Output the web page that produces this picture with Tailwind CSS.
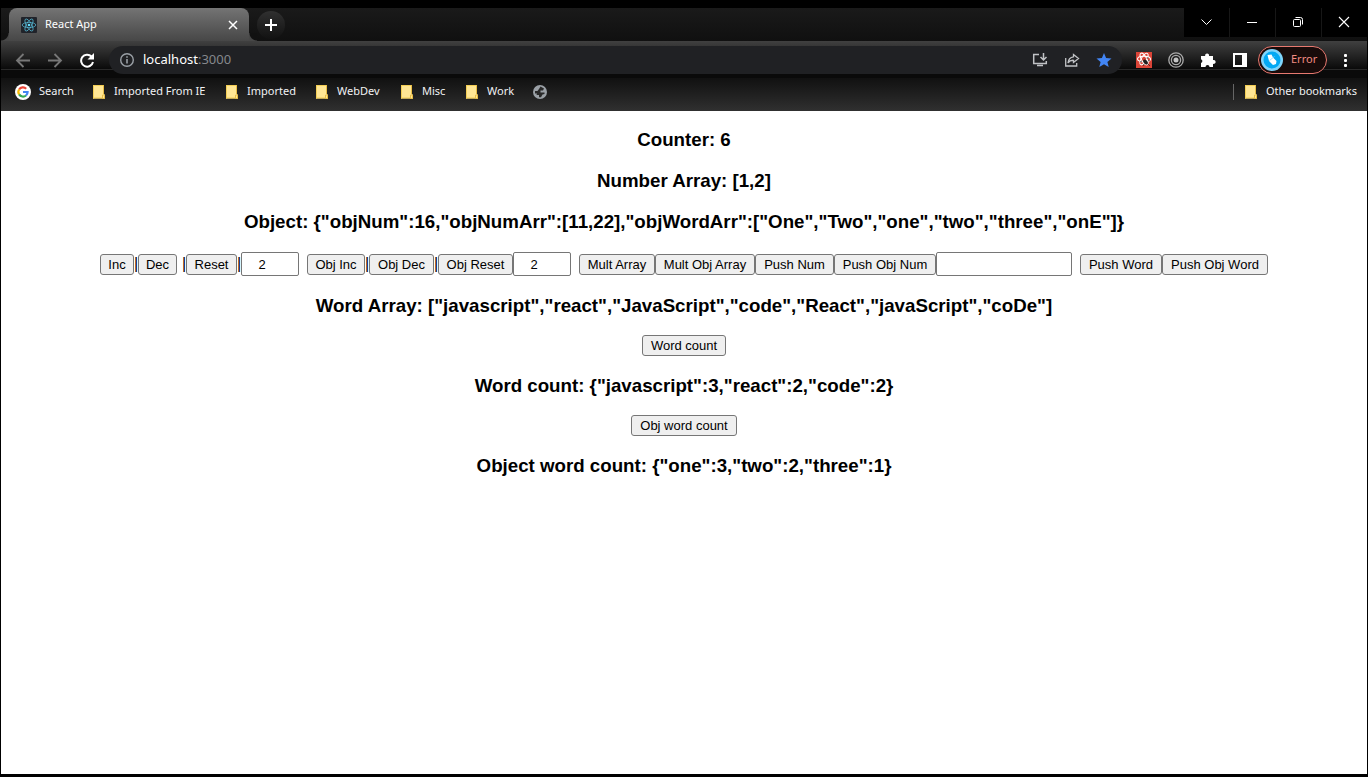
<!DOCTYPE html>
<html lang="en">
<head>
<meta charset="utf-8">
<title>React App</title>
<script src="https://cdn.jsdelivr.net/npm/@tailwindcss/browser@4"></script>
</head>
<body class="flex min-h-screen flex-col border-x border-t-8 border-b-3 border-black bg-white font-['Liberation_Sans',sans-serif] text-black">
<svg class="hidden">
  <symbol id="folder" viewBox="0 0 14 16"><path d="M1 1h11v9.500h1V14.500H1z" fill="#ffe694"/><path d="M1.500 1v13.500M1 14h9M1 1.500h10.500" stroke="#f3ce55" fill="none"/><path d="M11.500 1v9M10.500 14.500v-3.500h2v3.500z" stroke="#e8bd45" fill="#ffe694"/></symbol>
</svg>
<header class="font-['Noto_Sans',sans-serif] text-[11px] text-[#f1f2f4]">
  <div class="flex h-[33px] items-start bg-linear-to-b from-[#1a1a1a] to-[#101010]">
    <div class="relative ml-2 flex h-[33px] w-60 items-center rounded-t-lg bg-linear-to-b from-[#747474] to-[#474747] pl-3 pr-2">
      <span class="absolute bottom-0 -left-2 size-2 bg-[radial-gradient(circle_at_0_0,#111_7px,#474747_8px)]"></span>
      <span class="absolute bottom-0 -right-2 size-2 bg-[radial-gradient(circle_at_100%_0,#111_7px,#474747_8px)]"></span>
      <svg class="size-4" viewBox="0 0 16 16"><rect width="16" height="16" rx="1" fill="#20232a"/><g fill="none" stroke="#58bcd8" stroke-width=".7"><ellipse cx="8" cy="8" rx="6.800" ry="2.600"/><ellipse cx="8" cy="8" rx="6.800" ry="2.600" transform="rotate(60 8 8)"/><ellipse cx="8" cy="8" rx="6.800" ry="2.600" transform="rotate(120 8 8)"/></g><circle cx="8" cy="8" r="1.300" fill="#61dafb"/></svg>
      <span class="ml-2 text-white">React App</span>
      <button aria-label="Close tab" class="ml-auto grid size-4 place-items-center"><svg class="size-4" viewBox="0 0 16 16"><path d="M4 4l8 8M12 4l-8 8" stroke="#fff" stroke-width="1.500"/></svg></button>
    </div>
    <button aria-label="New tab" class="mt-[3px] ml-2 grid size-7 place-items-center rounded-full bg-linear-to-b from-[#303030] to-[#121212]"><svg class="size-4" viewBox="0 0 16 16"><path d="M8 2v12M2 8h12" stroke="#fff" stroke-width="2"/></svg></button>
    <div class="ml-auto flex h-[29px] gap-px bg-[#171717]">
      <button aria-label="Search tabs" class="grid w-[45px] place-items-center bg-black pr-0.5 pb-0.5"><svg class="size-4" viewBox="0 0 16 16"><path d="M3.500 5.500L8.500 10.500L13.500 5.500" fill="none" stroke="#fff"/></svg></button>
      <button aria-label="Minimize" class="grid w-[45px] place-items-center bg-black pr-0.5 pb-0.5"><svg class="size-4" viewBox="0 0 16 16"><path d="M3 8.500h10" stroke="#fff"/></svg></button>
      <button aria-label="Restore" class="grid w-[45px] place-items-center bg-black pr-0.5 pb-0.5"><svg class="size-4" viewBox="0 0 16 16"><g fill="none" stroke="#fff"><rect x="3.500" y="5.500" width="7" height="7" rx="1"/><path d="M5.500 3.500h5q2 0 2 2v5"/></g></svg></button>
      <button aria-label="Close" class="grid w-[45px] place-items-center bg-black pr-0.5 pb-0.5"><svg class="size-4" viewBox="0 0 16 16"><path d="M3 3l10 10M13 3L3 13" stroke="#fff" stroke-width="1.100"/></svg></button>
    </div>
  </div>
  <div class="flex h-[37px] items-center bg-[linear-gradient(#404040_0,#0a0a0a_28px,#292929_28px,#292929_29px,#0a0a0a_29px)] pl-3.5 pr-3.5">
    <button aria-label="Back"><svg class="size-4" viewBox="0 0 16 16"><path d="M15 8.500H2M8.500 2L2 8.500L8.500 15" fill="none" stroke="#777" stroke-width="1.800"/></svg></button>
    <button aria-label="Forward" class="ml-4"><svg class="size-4" viewBox="0 0 16 16"><path d="M1 8.500h13M7.500 2L14 8.500L7.500 15" fill="none" stroke="#777" stroke-width="1.800"/></svg></button>
    <button aria-label="Reload" class="ml-4"><svg class="size-4" viewBox="0 0 16 16"><path d="M12.500 4.500A6 6 0 1 0 14 10" fill="none" stroke="#fff" stroke-width="2"/><path d="M15 1v6.500H8.500z" fill="#fff"/></svg></button>
    <div class="ml-3.5 flex h-7 flex-1 items-center rounded-full bg-[#202124] pl-2.5 pr-2.5">
      <svg class="size-4" viewBox="0 0 16 16"><circle cx="8" cy="8" r="6.300" fill="none" stroke="#9aa0a6" stroke-width="1.400"/><path d="M8 7v4.500M8 4.200v1.500" stroke="#9aa0a6" stroke-width="1.600"/></svg>
      <div class="ml-2 flex-1 text-[13px] text-white">localhost<span class="text-[#85888c]">:3000</span></div>
      <button aria-label="Install app"><svg class="size-4" viewBox="0 0 16 16"><path d="M7 2.500H1.700v9h12.600V9M5 13.500h6M11.500 1v7M8.500 5l3 3l3-3" fill="none" stroke="#c0c2c5" stroke-width="1.500"/></svg></button>
      <button aria-label="Share" class="ml-4"><svg class="size-4" viewBox="0 0 16 16"><path d="M1.700 6v8h11v-3M9.500 2.500L14.500 6.500L9.500 10.500V8.300Q6 8 4 11Q4.500 5.500 9.500 4.800z" fill="none" stroke="#c0c2c5" stroke-width="1.300"/></svg></button>
      <button aria-label="Bookmark" class="ml-4"><svg class="size-4" viewBox="0 0 16 16"><path d="M8 1l2.100 4.900l5.400.5l-4.100 3.500l1.300 5.200L8 12.300l-4.700 2.800l1.300-5.200L.5 6.400l5.400-.5z" fill="#4285f4"/></svg></button>
    </div>
    <div class="ml-3.5 flex items-center gap-4">
      <button aria-label="Debugger extension"><svg class="size-4" viewBox="0 0 16 16"><path fill="#db4437" d="M0 0h16v16H0z"/><g fill="none" stroke="#fff" stroke-width="1.100"><ellipse cx="8" cy="7" rx="6.500" ry="2.800"/><ellipse cx="8" cy="7" rx="6.500" ry="2.600" transform="rotate(60 8 7)"/><ellipse cx="8" cy="7" rx="6.500" ry="2.600" transform="rotate(120 8 7)"/></g><ellipse cx="9.500" cy="10" rx="1.800" ry="2.900" transform="rotate(-40 9.500 10)" fill="#202020"/><path d="M6 9l-2 1M8 12l-1 2M11 7l1-2M12 9l2-1M12 12l2 2" stroke="#202020" stroke-width=".7"/></svg></button>
      <button aria-label="Target extension"><svg class="size-4" viewBox="0 0 16 16"><g fill="none" stroke="#aaa" stroke-width="1.300"><circle cx="8" cy="8" r="7.200"/><circle cx="8" cy="8" r="4.600"/></g><circle cx="8" cy="8" r="2.500" fill="#c4c4c4"/></svg></button>
      <button aria-label="Extensions"><svg class="size-4" viewBox="0 0 16 16"><path fill="#fff" d="M1 4h4.200a2 2 0 1 1 3.800 0h4v4a2 2 0 1 1 0 3.800V15H9.500a2 2 0 0 0-4 0H1v-4a2 2 0 0 0 0-3.800z"/></svg></button>
      <button aria-label="Side panel"><svg class="size-4" viewBox="0 0 16 16"><path fill="#fff" fill-rule="evenodd" d="M1 1h14v14H1zM3 3v10h7V3z"/></svg></button>
    </div>
    <button class="ml-2.5 flex h-7 w-[69px] items-center rounded-full border border-[#e87970] bg-[#180b0a] pl-0.5 text-[#f28b82]">
      <svg class="size-[22px]" viewBox="0 0 22 22"><circle cx="11" cy="11" r="11" fill="#81d4fa"/><circle cx="11" cy="11" r="8.500" fill="#03a9f4"/><path d="M6.500 6l4-.5l1.500 3l3.500 3.500l-.5 3l-3 1l-4-4z" fill="#fff"/><path d="M8.500 11.500l5-4" stroke="#81d4fa" stroke-width=".8"/></svg>
      <span class="ml-2">Error</span>
    </button>
    <button aria-label="Menu" class="ml-2.5"><svg class="size-4" viewBox="0 0 16 16"><g fill="#fff"><rect x="7" y="2" width="3" height="3" rx="1"/><rect x="7" y="7" width="3" height="3" rx="1"/><rect x="7" y="12" width="3" height="3" rx="1"/></g></svg></button>
  </div>
  <nav class="flex h-[33px] items-center bg-linear-to-b from-[#111] to-[#303030] pl-3.5 pr-2.5 pb-1.5">
    <a href="#" class="flex w-[77px] items-center gap-2"><svg class="size-4" viewBox="0 0 16 16"><circle cx="8" cy="8" r="8" fill="#fff"/><g fill="none" stroke-width="2.200"><path d="M4.100 5.500A4.600 4.600 0 0 1 11.200 4.700" stroke="#ea4335"/><path d="M4.100 10.400A4.600 4.600 0 0 1 4.100 5.500" stroke="#fbbc05"/><path d="M11 11.500A4.600 4.600 0 0 1 4.100 10.400" stroke="#34a853"/><path d="M8 8h4.600Q12.600 10 11 11.500" stroke="#4285f4"/></g></svg>Search</a>
    <a href="#" class="flex w-[133px] items-center gap-2"><svg class="h-4 w-3.5"><use href="#folder"/></svg>Imported From IE</a>
    <a href="#" class="flex w-[90px] items-center gap-2"><svg class="h-4 w-3.5"><use href="#folder"/></svg>Imported</a>
    <a href="#" class="flex w-[85px] items-center gap-2"><svg class="h-4 w-3.5"><use href="#folder"/></svg>WebDev</a>
    <a href="#" class="flex w-[65px] items-center gap-2"><svg class="h-4 w-3.5"><use href="#folder"/></svg>Misc</a>
    <a href="#" class="flex w-[67px] items-center gap-2"><svg class="h-4 w-3.5"><use href="#folder"/></svg>Work</a>
    <a href="#" aria-label="Untitled bookmark"><svg class="size-4" viewBox="0 0 16 16"><circle cx="8" cy="8" r="7" fill="#9aa0a6"/><path d="M8.500 2.500L12 4.500L11 6.500H8.500V8.500H12.500V10L10.500 10.500L9 13.200H7V11H4.500L5 9.500H3V7H5.500L7 5z" fill="#292929"/></svg></a>
    <div class="ml-auto flex items-center"><span class="h-4 w-px bg-[#666]"></span><a href="#" class="ml-2.5 flex items-center gap-2"><svg class="h-4 w-3.5"><use href="#folder"/></svg>Other bookmarks</a></div>
  </nav>
</header>
<main class="flex flex-col items-center gap-[19px] pt-[18px] text-[13px]">
  <h3 class="text-[1.17rem] leading-[22px] font-bold">Counter: 6</h3>
  <h3 class="text-[1.17rem] leading-[22px] font-bold">Number Array: [1,2]</h3>
  <h3 class="text-[1.17rem] leading-[22px] font-bold">Object: {"objNum":16,"objNumArr":[11,22],"objWordArr":["One","Two","one","two","three","onE"]}</h3>
  <div class="flex items-center whitespace-nowrap">
    <button class="h-[21px] w-[34px] rounded-[3px] border border-[#767676] bg-[#efefef]">Inc</button><span class="w-1 text-base">|</span>
    <button class="h-[21px] w-[39px] rounded-[3px] border border-[#767676] bg-[#efefef]">Dec</button><span class="ml-[5px] w-1 text-base">|</span>
    <button class="h-[21px] w-[51px] rounded-[3px] border border-[#767676] bg-[#efefef]">Reset</button><span class="w-1 text-base">|</span>
    <input aria-label="Amount" value="2" class="h-6 w-[58px] rounded-xs border border-[#767676] bg-white pr-4 text-center">
    <button class="ml-2 h-[21px] w-[58px] rounded-[3px] border border-[#767676] bg-[#efefef]">Obj Inc</button><span class="w-1 text-base">|</span>
    <button class="h-[21px] w-[65px] rounded-[3px] border border-[#767676] bg-[#efefef]">Obj Dec</button><span class="w-1 text-base">|</span>
    <button class="h-[21px] w-[75px] rounded-[3px] border border-[#767676] bg-[#efefef]">Obj Reset</button>
    <input aria-label="Object amount" value="2" class="h-6 w-[58px] rounded-xs border border-[#767676] bg-white pr-4 text-center">
    <button class="ml-2 h-[21px] w-[76px] rounded-[3px] border border-[#767676] bg-[#efefef]">Mult Array</button>
    <button class="h-[21px] w-[100px] rounded-[3px] border border-[#767676] bg-[#efefef]">Mult Obj Array</button>
    <button class="h-[21px] w-[79px] rounded-[3px] border border-[#767676] bg-[#efefef]">Push Num</button>
    <button class="h-[21px] w-[102px] rounded-[3px] border border-[#767676] bg-[#efefef]">Push Obj Num</button>
    <input aria-label="Word" class="h-6 w-[136px] rounded-xs border border-[#767676] bg-white px-1">
    <button class="ml-2 h-[21px] w-[82px] rounded-[3px] border border-[#767676] bg-[#efefef]">Push Word</button>
    <button class="h-[21px] w-[106px] rounded-[3px] border border-[#767676] bg-[#efefef]">Push Obj Word</button>
  </div>
  <h3 class="text-[1.17rem] leading-[21px] font-bold">Word Array: ["javascript","react","JavaScript","code","React","javaScript","coDe"]</h3>
  <button class="h-[21px] w-[84px] rounded-[3px] border border-[#767676] bg-[#efefef]">Word count</button>
  <h3 class="text-[1.17rem] leading-[21px] font-bold">Word count: {"javascript":3,"react":2,"code":2}</h3>
  <button class="h-[21px] w-[106px] rounded-[3px] border border-[#767676] bg-[#efefef]">Obj word count</button>
  <h3 class="text-[1.17rem] leading-[21px] font-bold">Object word count: {"one":3,"two":2,"three":1}</h3>
</main>
</body>
</html>
